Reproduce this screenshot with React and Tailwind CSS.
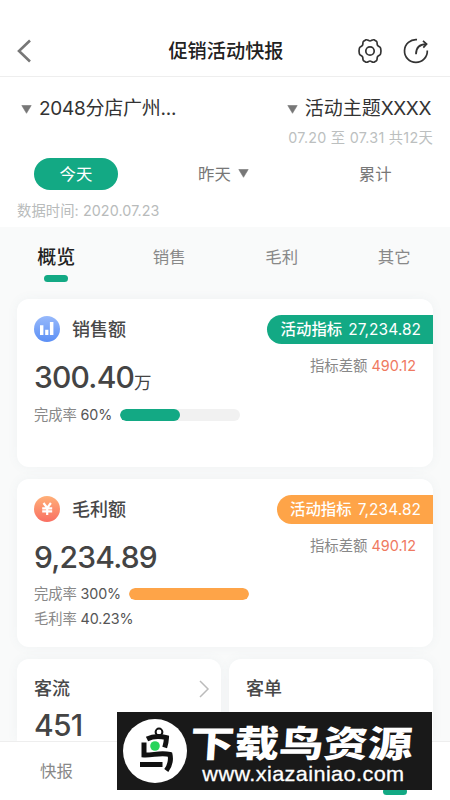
import React, { useState } from 'react';

const BackIcon = () => (
  <svg className="-ml-px" width="16" height="24" viewBox="0 0 16 24" fill="none" stroke="#777" strokeWidth="2.6">
    <path d="M14 1.5 3 12l11 10.5" />
  </svg>
);

const SettingsIcon = () => (
  <svg width="26" height="26" viewBox="0 0 26 26" fill="none" stroke="#333" strokeWidth="1.7" strokeLinejoin="round">
    <path d="M9 1.8c1.6-.5 2.5 1.2 4 1.2s2.4-1.7 4-1.2l2.4 1.4c1.3 1.1.3 2.7 1.1 4s2.7 1.3 3.1 2.9c.4 1.500.4 4.300 0 5.800-.4 1.600-2.300 1.600-3.100 2.900s.2 2.900-1.100 4L17 24.200c-1.600.5-2.500-1.200-4-1.200s-2.400 1.700-4 1.200l-2.400-1.400c-1.300-1.100-.3-2.700-1.100-4s-2.700-1.300-3.100-2.900c-.4-1.500-.4-4.300 0-5.800.4-1.600 2.300-1.600 3.100-2.900s-.2-2.900 1.100-4Z" />
    <circle cx="13" cy="13" r="4.2" />
  </svg>
);

const ShareIcon = () => (
  <svg width="26" height="26" viewBox="0 0 26 26" fill="none" stroke="#333" strokeWidth="1.7">
    <path d="M14 1.7A11.4 11.4 0 1 0 24.300 12.500" />
    <path d="M13 16.200c0-6.500 3.200-10 10.200-10.100" />
    <path d="m20 2.800 3.600 3.300-3.300 3.500" />
  </svg>
);

const Caret = () => (
  <svg width="11" height="9" viewBox="0 0 11 9" fill="#777">
    <path d="M.8.5h9.4L5.5 8.300Z" stroke="#777" strokeWidth=".6" strokeLinejoin="round" />
  </svg>
);

const SalesIcon = () => (
  <svg width="26" height="26" viewBox="0 0 26 26">
    <defs>
      <linearGradient id="salesBg" x1="0" y1="0" x2="0" y2="1">
        <stop stopColor="#97b9fb" />
        <stop offset="1" stopColor="#5b8ff5" />
      </linearGradient>
    </defs>
    <circle cx="13" cy="13" r="13" fill="url(#salesBg)" />
    <path d="M6 9.200h3.400v9.800H6zM11.200 13.800h3.200V19h-3.200zM15.900 6h3.500v13h-3.500z" fill="#fff" />
  </svg>
);

const ProfitIcon = () => (
  <svg width="26" height="26" viewBox="0 0 26 26">
    <defs>
      <linearGradient id="profitBg" x1="0" y1="0" x2="0" y2="1">
        <stop stopColor="#ffb078" />
        <stop offset="1" stopColor="#f96f62" />
      </linearGradient>
    </defs>
    <circle cx="13" cy="13" r="13" fill="url(#profitBg)" />
    <path d="m9.500 7 3.700 5 3.700-5M8.200 12.300h10M8.200 15.300h10M13.200 12v7" fill="none" stroke="#fff" strokeWidth="2.200" />
  </svg>
);

const BirdLogo = () => (
  <svg className="shrink-0" width="64" height="64" viewBox="0 0 64 64">
    <circle cx="32" cy="32" r="32" fill="#fff" />
    <circle cx="36" cy="13" r="3.400" fill="none" stroke="#111" strokeWidth="2" />
    <path d="M24 20c5.500-2.800 13-3.200 19.500-1.300-.2 3.500-.4 6-1.800 9.800M21 23.500v12.500c9 .5 16-2.800 26-.5 1.300 6 .3 10.500-3.700 16M17 45.500h22.500" fill="none" stroke="#111" strokeWidth="5" />
    <circle cx="32" cy="27" r="4.800" fill="#27d45b" />
  </svg>
);

const tabs = ['概览', '销售', '毛利', '其它'];

const cards = [
  {
    title: '销售额',
    icon: SalesIcon,
    value: '300.40',
    unit: '万',
    target: '27,234.82',
    diff: '490.12',
    rate: '60%',
    percent: 50,
    badgeClass: 'bg-[#13a984] w-[166px]',
    barClass: 'bg-[#13a984]'
  },
  {
    title: '毛利额',
    icon: ProfitIcon,
    value: '9,234.89',
    target: '7,234.82',
    diff: '490.12',
    rate: '300%',
    percent: 100,
    margin: '40.23%',
    badgeClass: 'bg-[#fea448] w-[156px]',
    barClass: 'bg-[#fea448]'
  }
];

const MetricCard = ({ card }) => {
  const Icon = card.icon;
  return (
    <div className="h-[168px] rounded-xl bg-white pl-[17px] shadow-[0_0_12px_rgba(90,120,140,0.06)]">
      <div className="flex justify-between">
        <div>
          <div className="flex h-[60px] items-center gap-3">
            <Icon />
            <span className="pt-px text-[18px] font-medium text-[#484848]">{card.title}</span>
          </div>
          <div className="flex h-9 items-baseline leading-9 text-[#444]">
            <span className="text-[30px] font-medium tracking-[-0.8px]">{card.value}</span>
            {card.unit && <span className="relative top-px text-[17.5px]">{card.unit}</span>}
          </div>
        </div>
        <div className="flex flex-col items-end pt-4">
          <div className={`flex h-[29px] items-center justify-end whitespace-nowrap rounded-l-full pr-3 text-[15.4px] text-white ${card.badgeClass}`}>
            <span className="font-medium">活动指标</span>
            <span className="ml-[6px] tracking-[0.1px]">{card.target}</span>
          </div>
          <div className="mt-3 pr-[17px] text-[14.4px] leading-5 text-[#888]">
            指标差额 <span className="text-[#ef7961]">{card.diff}</span>
          </div>
        </div>
      </div>
      <div className={`flex items-center text-[14.3px] leading-5 text-[#888] ${card.margin ? 'mt-[9px]' : 'mt-[10px]'}`}>
        <span className="tracking-[-0.1px]">完成率 <span className="text-[#555]">{card.rate}</span></span>
        <div className="ml-2 h-3 w-[120px] overflow-hidden rounded-full bg-[#f1f1f1]">
          <div className={`h-full rounded-full ${card.barClass}`} style={{ width: `${card.percent}%` }} />
        </div>
      </div>
      {card.margin && (
        <div className="mt-[5px] text-[14.3px] leading-5 tracking-[-0.1px] text-[#888]">
          毛利率 <span className="text-[#555]">{card.margin}</span>
        </div>
      )}
    </div>
  );
};

const App = () => {
  const [activeTab, setActiveTab] = useState('概览');

  return (
    <div className="relative flex h-[800px] w-[450px] flex-col overflow-hidden bg-white font-[Inter,'Noto_Sans_CJK_SC',sans-serif]">
      {/* Header */}
      <header className="flex h-[77px] shrink-0 items-center border-b border-[#eee] pl-[17px] pr-[15px] pt-[25px]">
        <div className="flex w-[80px]"><BackIcon /></div>
        <h1 className="flex-1 pt-px text-center text-[19.2px] font-medium text-[#222]">促销活动快报</h1>
        <div className="flex w-[80px] justify-end gap-5 pr-[6px]">
          <SettingsIcon />
          <ShareIcon />
        </div>
      </header>

      {/* Filters */}
      <section className="h-[150px] shrink-0">
        <div className="flex h-[50px] items-center justify-between pl-[21px] pr-[19px] pt-[14px] text-[19px] text-[#333]">
          <div className="flex items-center gap-[7px]"><Caret /><span className="tracking-[-0.25px]">2048分店广州...</span></div>
          <div className="flex items-center gap-[7px]"><Caret /><span>活动主题<span className="tracking-[-0.4px]">XXXX</span></span></div>
        </div>
        <div className="h-5 pr-[17px] text-right text-[14.3px] leading-[22px] tracking-[0.27px] text-[#bcbfbf]">07.20 至 07.31 共12天</div>
        <div className="mt-[11px] flex h-8 items-center pl-[34px] text-[16.4px] text-[#777]">
          <button className="h-8 w-[84px] rounded-full bg-[#13a984] text-white">今天</button>
          <div className="ml-[80px] flex items-center gap-[7px]">昨天 <Caret /></div>
          <span className="ml-[110px]">累计</span>
        </div>
        <div className="mt-[11px] pl-[17px] text-[14.3px] leading-5 tracking-[0.1px] text-[#b8bbbb]">数据时间: 2020.07.23</div>
      </section>

      <main className="flex-1 overflow-hidden bg-[#f9fafa]">
        {/* Tabs */}
        <nav className="grid h-[72px] grid-cols-4">
          {tabs.map(tab => {
            const isActive = tab === activeTab;
            return (
              <button
                key={tab}
                onClick={() => setActiveTab(tab)}
                className={`flex flex-col items-center ${isActive ? 'pt-4 text-[19px] font-medium text-[#222]' : 'pl-px pt-[15px] text-[16.4px] text-[#888]'}`}
              >
                <span className="leading-[30px]">{tab}</span>
                {isActive && <span className="mt-[2px] h-[7px] w-6 rounded-full bg-[#13a984]" />}
              </button>
            );
          })}
        </nav>

        {/* Cards */}
        <div className="flex flex-col gap-3 px-[17px]">
          {cards.map(card => <MetricCard key={card.title} card={card} />)}
          <div className="grid grid-cols-2 gap-2">
            <div className="h-[82px] rounded-t-xl bg-white px-[17px] pt-[17px] shadow-[0_0_12px_rgba(90,120,140,0.06)]">
              <div className="flex items-center justify-between text-[18px] font-medium leading-[26px] text-[#484848]">
                客流
                <svg className="-mr-[6px]" width="12" height="18" viewBox="0 0 12 18" fill="none" stroke="#bbb" strokeWidth="1.5">
                  <path d="m2 1 8 8-8 8" />
                </svg>
              </div>
              <div className="mt-[9px] text-[30px] font-medium leading-[28px] tracking-[-0.8px] text-[#444]">451</div>
            </div>
            <div className="h-[82px] rounded-t-xl bg-white px-[17px] pt-[17px] text-[18px] font-medium leading-[26px] text-[#484848] shadow-[0_0_12px_rgba(90,120,140,0.06)]">
              客单
            </div>
          </div>
        </div>
      </main>

      {/* Bottom bar */}
      <footer className="flex h-[59px] shrink-0 items-start justify-between border-t border-[#eee] bg-white pl-10 pr-[43px]">
        <span className="pt-4 text-[16.4px] leading-[26px] text-[#888]">快报</span>
        <span className="mt-[46px] h-[7px] w-6 rounded-full bg-[#13a984]" />
      </footer>

      {/* Site banner over the page */}
      <div className="absolute left-[117px] top-[712px] flex h-[78px] w-[315px] items-center bg-[#191919] pl-[6px] text-white">
        <BirdLogo />
        <div className="flex flex-col pl-[3px] pt-[7px]">
          <span className="origin-left -skew-x-3 scale-x-[1.22] whitespace-nowrap text-[36.5px] font-black leading-10">下载鸟资源</span>
          <span className="-mt-0.5 origin-left scale-x-[1.03] pl-[12px] font-['Liberation_Sans',sans-serif] text-[21px] leading-6 tracking-[0.4px] [-webkit-text-stroke:0.3px_white]">www.xiazainiao.com</span>
        </div>
      </div>
    </div>
  );
};

export default App;
